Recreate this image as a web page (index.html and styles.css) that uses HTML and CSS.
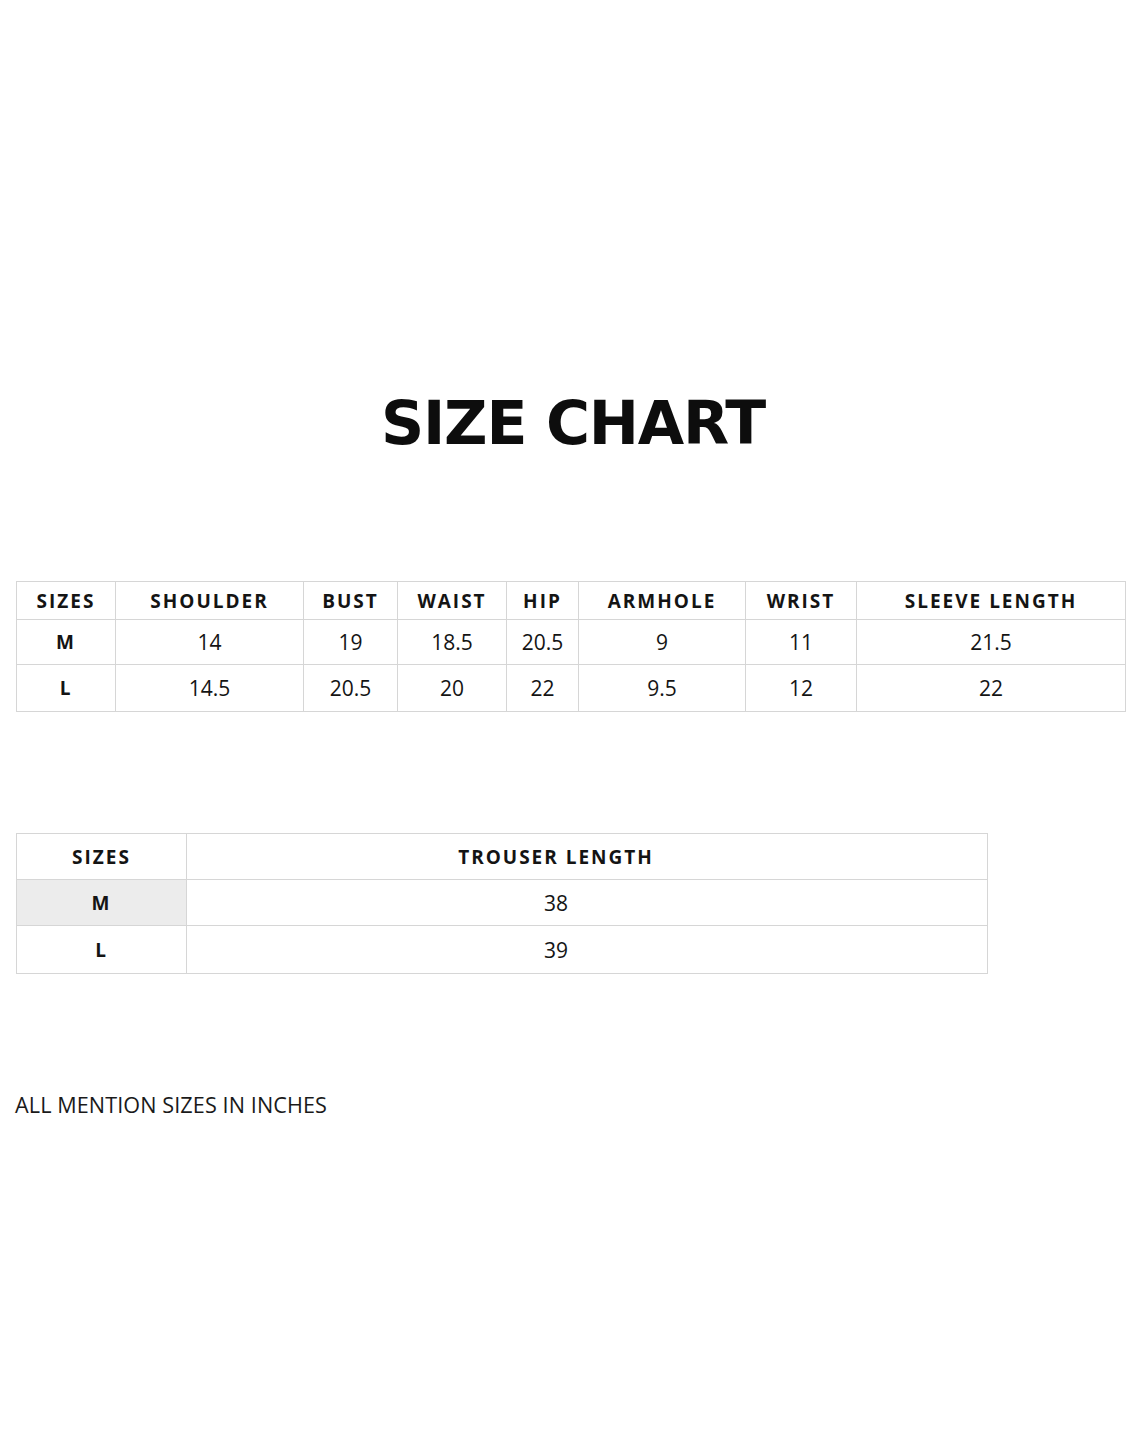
FILE: index.html
```html
<!DOCTYPE html>
<html lang="en">
<head>
<meta charset="utf-8">
<title>Size Chart</title>
<link rel="stylesheet" href="styles.css">
</head>
<body>
<main class="page">
  <h1 class="title">SIZE CHART</h1>

  <table class="chart chart-top">
    <colgroup>
      <col class="c1"><col class="c2"><col class="c3"><col class="c4">
      <col class="c5"><col class="c6"><col class="c7"><col class="c8">
    </colgroup>
    <thead>
      <tr class="head-row">
        <th>SIZES</th><th>SHOULDER</th><th>BUST</th><th>WAIST</th>
        <th>HIP</th><th>ARMHOLE</th><th>WRIST</th><th>SLEEVE LENGTH</th>
      </tr>
    </thead>
    <tbody>
      <tr class="row-m">
        <th>M</th><td>14</td><td>19</td><td>18.5</td><td>20.5</td><td>9</td><td>11</td><td>21.5</td>
      </tr>
      <tr class="row-l">
        <th>L</th><td>14.5</td><td>20.5</td><td>20</td><td>22</td><td>9.5</td><td>12</td><td>22</td>
      </tr>
    </tbody>
  </table>

  <table class="chart chart-bottom">
    <colgroup>
      <col class="d1"><col class="d2">
    </colgroup>
    <thead>
      <tr class="head-row2">
        <th>SIZES</th><th class="shift">TROUSER LENGTH</th>
      </tr>
    </thead>
    <tbody>
      <tr class="row2">
        <th class="shaded">M</th><td class="shift">38</td>
      </tr>
      <tr class="row2 last">
        <th>L</th><td class="shift">39</td>
      </tr>
    </tbody>
  </table>

  <p class="note">ALL MENTION SIZES IN INCHES</p>
</main>
</body>
</html>
```

FILE: styles.css
```css
html, body {
  margin: 0;
  padding: 0;
  background: #ffffff;
}

body {
  font-family: "Open Sans", "Noto Sans", sans-serif;
  color: #111111;
}

.page {
  padding-top: 393px;
  padding-left: 16px;
}

.title {
  margin: 0 16px 0 0;
  padding-left: 18px;
  text-align: center;
  font-family: "DejaVu Sans", Verdana, sans-serif;
  font-weight: bold;
  font-size: 60px;
  line-height: 60px;
  letter-spacing: -1.2px;
  color: #0d0d0d;
}

.chart {
  border-collapse: collapse;
  table-layout: fixed;
  border: 1px solid #cfcfcf;
}

.chart th,
.chart td {
  border: 1px solid #d6d6d6;
  padding: 0;
  text-align: center;
  vertical-align: middle;
  color: #141414;
}

.chart th {
  font-size: 19px;
  font-weight: 700;
  letter-spacing: 2px;
}

.chart td {
  font-size: 21px;
  font-weight: 400;
}

.chart-top {
  margin-top: 128px;
  width: 1109px;
}

.c1 { width: 99px; }
.c2 { width: 188px; }
.c3 { width: 94px; }
.c4 { width: 109px; }
.c5 { width: 72px; }
.c6 { width: 167px; }
.c7 { width: 111px; }
.c8 { width: 269px; }

.head-row { height: 38px; }
.row-m { height: 45px; }
.row-l { height: 47px; }

.chart-bottom {
  margin-top: 121px;
  width: 971px;
}

.d1 { width: 170px; }
.d2 { width: 801px; }

.head-row2 { height: 46px; }
.row2 { height: 46px; }
.row2.last { height: 48px; }

.shift {
  padding-right: 62px !important;
}

.shaded {
  background: #ececec;
}

.note {
  margin: 116px 0 0 -1px;
  font-size: 21.6px;
  font-weight: 400;
  color: #1a1a1a;
  letter-spacing: 0.1px;
}
```
